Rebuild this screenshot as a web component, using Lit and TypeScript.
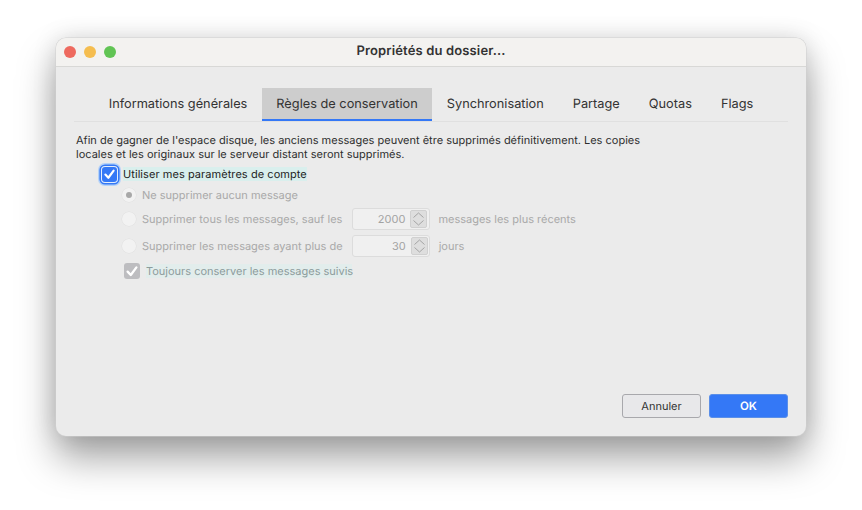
import { LitElement, html, css, svg } from "lit";
import { customElement } from "lit/decorators.js";

const check = svg`<svg class="tick" viewBox="0 0 16 16" width="16" height="16"><path d="M3.6 8.6 L6.8 12 L12.4 4.4" fill="none" stroke="#fff" stroke-width="2.3" stroke-linecap="round" stroke-linejoin="round"/></svg>`;

@customElement("app-root")
export class AppRoot extends LitElement {
  static styles = css`
    :host { display: block; width: 862px; height: 510px; background: #fff; overflow: hidden; text-rendering: geometricPrecision;
      font-family: "Inter", "Liberation Sans", sans-serif; color: #2a2a2a; }
    .page { box-sizing: border-box; height: 510px; padding: 38px 56px 74px; }
    .win { box-sizing: border-box; height: 398px; border-radius: 10px; background: #ebebeb; display: flex; flex-direction: column;
      box-shadow: 0 0 0 0.5px #d0d0d0, 0 22px 38px rgba(0,0,0,.36), 0 0 24px rgba(0,0,0,.13); overflow: hidden; }
    .title { height: 28px; flex: none; background: #f3f2f0; border-bottom: 1px solid #d8d8d6; display: flex; align-items: center; position: relative; padding-left: 8px; gap: 8px; }
    .light { width: 12px; height: 12px; border-radius: 50%; }
    .red { background: #ee6a5f; } .yellow { background: #f5bd4f; } .green { background: #61c454; }
    .title h1 { position: absolute; left: 0; right: 0; top: 0; bottom: 0; margin: 0; font-size: 13px; line-height: 27px; font-weight: 600; text-align: center; color: #333; letter-spacing: .14px; }
    .body { flex: 1; display: flex; flex-direction: column; padding: 21px 18px 18px; }
    .tabs { display: flex; justify-content: center; border-bottom: 1px solid #e0e0e0; height: 33px; box-sizing: content-box; }
    .tab { font-size: 12.78px; line-height: 33px; padding: 0 14.5px; color: #333; white-space: nowrap; height: 33px; box-sizing: border-box; }
    .tab.on { background: #cdcdcd; border-bottom: 2px solid #3478f6; }
    .desc { margin: 11px 0 0 2px; width: 590px; font-size: 11px; line-height: 14px; color: #2e2e2e; }
    .opts { margin: 4px 0 0 26px; display: flex; flex-direction: column; }
    .row { display: flex; align-items: center; }
    .main { height: 18px; }
    .cb { box-sizing: border-box; width: 15px; height: 15px; border-radius: 3px; background: #3478f6; margin: 0 0 0 2px; display: flex; align-items: center; justify-content: center; flex: none;
      box-shadow: 0 0 0 1px #e4eefb, 0 0 0 2.6px #3478f6, 0 0 0 4px #b4d2f8; }
    .hl { background: #d9efed; line-height: 14px; font-size: 11px; white-space: nowrap; }
    .main .hl { color: #222; margin-left: 6px; width: 184px; letter-spacing: .06px; }
    .radio { width: 14px; height: 14px; border-radius: 50%; background: #f2f2f2; box-shadow: 0 0 0 .5px #e0e0e0; flex: none; display: flex; align-items: center; justify-content: center; margin-right: 6px; }
    .dot { width: 6px; height: 6px; border-radius: 50%; background: #a8a8a8; }
    .muted { color: #a9a9a9; font-size: 11px; white-space: nowrap; }
    .sub { padding-left: 22px; display: flex; flex-direction: column; }
    .r1 { height: 23px; }
    .r2 { height: 25px; }
    .r3 { height: 29px; }
    .spin { box-sizing: border-box; width: 78px; height: 22px; border: 1px solid #dcdcdc; border-radius: 3px; background: #f0f0f0; margin-left: 9.5px; display: flex; align-items: center; justify-content: flex-end; gap: 5px; padding-right: 1.5px; font-size: 11px; color: #a2a2a2; flex: none; }
    .arrows { width: 17px; height: 18px; background: #dedede; border: 1px solid #d0d0d0; box-sizing: border-box; border-radius: 2px; display: block; }
    .after { margin-left: 8.5px; }
    .keep { height: 21px; padding-left: 2px; }
    .cb2 { width: 16px; height: 16px; border-radius: 3px; background: #bdbdc0; display: flex; align-items: center; justify-content: center; margin-right: 6px; flex: none; }
    .keep .hl { color: #8d9c9c; width: 206px; background: #e2edec; }
    .spacer { flex: 1; }
    .btns { display: flex; justify-content: flex-end; gap: 8px; }
    .btn { box-sizing: border-box; width: 79px; height: 24px; border-radius: 3px; font-size: 11px; line-height: 22px; text-align: center; border: 1px solid #a8a8ac; background: #e8e8ea; color: #333; }
    .btn.ok { background: #3478f6; color: #fff; font-weight: 600; border-color: #5b8fe8; font-size: 11.5px; }
    .arrows svg { display: block; }
  `;

  private arrows() {
    return html`<span class="arrows"><svg viewBox="0 0 15 16" width="15" height="16"><path d="M2.5 6.5 L7.5 2 L12.5 6.5 M2.5 9.5 L7.5 14 L12.5 9.5" fill="none" stroke="#a5a5a5" stroke-width="1"/></svg></span>`;
  }

  render() {
    return html`<div class="page"><div class="win">
      <div class="title">
        <span class="light red"></span><span class="light yellow"></span><span class="light green"></span>
        <h1>Propriétés du dossier...</h1>
      </div>
      <div class="body">
        <div class="tabs">
          <div class="tab">Informations générales</div>
          <div class="tab on">Règles de conservation</div>
          <div class="tab">Synchronisation</div>
          <div class="tab">Partage</div>
          <div class="tab">Quotas</div>
          <div class="tab">Flags</div>
        </div>
        <p class="desc">Afin de gagner de l'espace disque, les anciens messages peuvent être supprimés définitivement. Les copies locales et les originaux sur le serveur distant seront supprimés.</p>
        <div class="opts">
          <div class="row main"><span class="cb">${check}</span><span class="hl">Utiliser mes paramètres de compte</span></div>
          <div class="sub">
            <div class="row r1"><span class="radio"><span class="dot"></span></span><span class="muted">Ne supprimer aucun message</span></div>
            <div class="row r2"><span class="radio"></span><span class="muted">Supprimer tous les messages, sauf les</span><span class="spin">2000${this.arrows()}</span><span class="muted after">messages les plus récents</span></div>
            <div class="row r3"><span class="radio"></span><span class="muted">Supprimer les messages ayant plus de</span><span class="spin">30${this.arrows()}</span><span class="muted after">jours</span></div>
            <div class="row keep"><span class="cb2">${check}</span><span class="hl">Toujours conserver les messages suivis</span></div>
          </div>
        </div>
        <div class="spacer"></div>
        <div class="btns"><div class="btn">Annuler</div><div class="btn ok">OK</div></div>
      </div>
    </div></div>`;
  }
}
